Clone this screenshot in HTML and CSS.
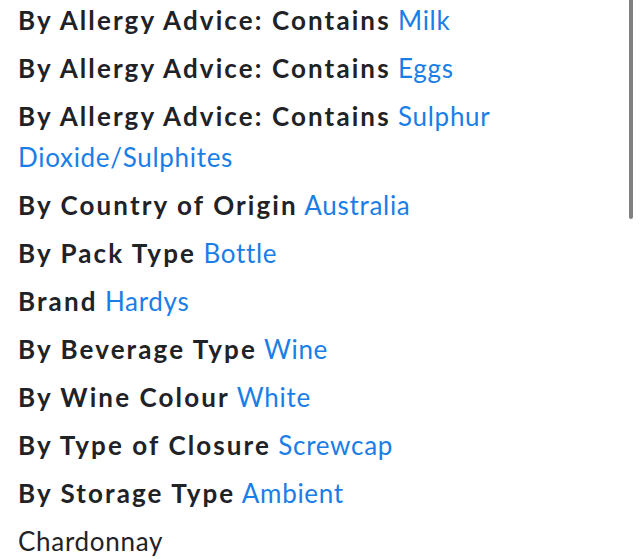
FILE: index.html
```html
<!DOCTYPE html>
<html lang="en">
<head>
<meta charset="utf-8">
<link rel="stylesheet" href="styles.css">
</head>
<body>
<div class="scrollbar"></div>
<ul class="attrs">
  <li><span class="label">By Allergy Advice: Contains</span> <a class="value">Milk</a></li>
  <li><span class="label">By Allergy Advice: Contains</span> <a class="value">Eggs</a></li>
  <li><span class="label">By Allergy Advice: Contains</span> <a class="value">Sulphur Dioxide/Sulphites</a></li>
  <li><span class="label">By Country of Origin</span> <a class="value">Australia</a></li>
  <li><span class="label">By Pack Type</span> <a class="value">Bottle</a></li>
  <li><span class="label">Brand</span> <a class="value">Hardys</a></li>
  <li><span class="label">By Beverage Type</span> <a class="value">Wine</a></li>
  <li><span class="label">By Wine Colour</span> <a class="value">White</a></li>
  <li><span class="label">By Type of Closure</span> <a class="value">Screwcap</a></li>
  <li><span class="label">By Storage Type</span> <a class="value">Ambient</a></li>
  <li class="plain">Chardonnay</li>
</ul>
</body>
</html>
```
FILE: styles.css
```css
html, body {
  margin: 0;
  padding: 0;
  background: #ffffff;
}
body {
  font-family: Lato, "Open Sans", sans-serif;
  color: #1f2226;
  overflow: hidden;
}
.attrs {
  list-style: none;
  margin: 0;
  padding: 0 12px 0 18px;
  display: flex;
  flex-direction: column;
  gap: 7px;
}
.attrs li {
  font-size: 26px;
  line-height: 41px;
  letter-spacing: 0.7px;
}
.label {
  font-weight: 700;
  letter-spacing: 2.1px;
}
.value {
  color: #1a7ee6;
  font-weight: 400;
  text-decoration: none;
}
.plain {
  font-weight: 400;
}
.scrollbar {
  position: fixed;
  top: 0;
  right: 7px;
  width: 4px;
  height: 219px;
  background: #808080;
  border-radius: 0 0 2px 2px;
}
```
